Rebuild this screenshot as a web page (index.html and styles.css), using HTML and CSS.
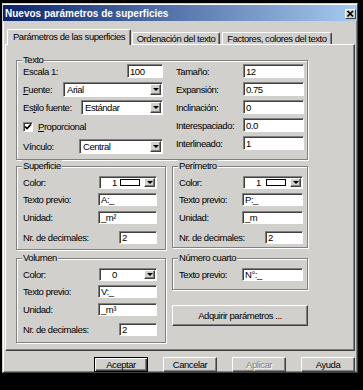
FILE: index.html
```html
<!DOCTYPE html>
<html lang="es">
<head>
    <meta charset="UTF-8">
    <title>Nuevos parámetros de superficies</title>
    <link rel="stylesheet" href="styles.css">
</head>
<body>

<div class="ventana">
    <div class="titulo">
        <span>Nuevos parámetros de superficies</span>
        <span class="cerrar">
            <svg width="9" height="8" viewBox="0 0 9 8"><path d="M1.5 1 L7 6.5 M7 1 L1.5 6.5" stroke="#000" stroke-width="1.7"/></svg>
        </span>
    </div>

    <div class="pestanas">
        <div class="pestana activa">Parámetros de las superficies</div>
        <div class="pestana p2">Ordenación del texto</div>
        <div class="pestana p3">Factores, colores del texto</div>
    </div>

    <div class="panel">
        <!-- Texto -->
        <div class="grupo texto">
            <span class="leyenda">Texto</span>
            <div class="col">
                <div class="fila"><span>Escala 1:</span><span class="campo alto w36">100</span></div>
                <div class="fila"><span><u>F</u>uente:</span><span class="lista w100">Arial<i class="flecha"></i></span></div>
                <div class="fila"><span>Es<u>t</u>ilo fuente:</span><span class="lista w82">Estándar<i class="flecha"></i></span></div>
                <div class="fila alta"><span class="check"><svg width="8" height="8" viewBox="0 0 8 8"><path d="M1 3.5 L3 5.6 L7 1.4" stroke="#000" stroke-width="1.6" fill="none"/></svg></span><span><u>P</u>roporcional</span></div>
                <div class="fila"><span>Vínculo:</span><span class="lista w84">Central<i class="flecha"></i></span></div>
            </div>
            <div class="col">
                <div class="fila"><span>Tamaño:</span><span class="campo alto w61">12</span></div>
                <div class="fila"><span>Expansión:</span><span class="campo alto w61">0.75</span></div>
                <div class="fila"><span>Inclinación:</span><span class="campo alto w61">0</span></div>
                <div class="fila"><span>Interespaciado:</span><span class="campo alto w61">0.0</span></div>
                <div class="fila"><span>Interlineado:</span><span class="campo alto w61">1</span></div>
            </div>
        </div>

        <div class="linea">
            <!-- Superficie -->
            <div class="grupo ancho superficie">
                <span class="leyenda">Superficie</span>
                <div class="fila f17"><span>Color:</span><span class="color w58">1<span class="derecha"><i class="muestra"></i><i class="flecha"></i></span></span></div>
                <div class="fila f17"><span>Texto previo:</span><span class="campo w59">A:_</span></div>
                <div class="fila f18"><span>Unidad:</span><span class="campo w59">_m²</span></div>
                <div class="fila f22"><span>Nr. de decimales:</span><span class="campo w38">2</span></div>
            </div>
            <!-- Perímetro -->
            <div class="grupo estrecho perimetro">
                <span class="leyenda">Perímetro</span>
                <div class="fila f17"><span>Color:</span><span class="color w60">1<span class="derecha"><i class="muestra"></i><i class="flecha"></i></span></span></div>
                <div class="fila f17"><span>Texto previo:</span><span class="campo w61">P:_</span></div>
                <div class="fila f18"><span>Unidad:</span><span class="campo w61">_m</span></div>
                <div class="fila f22"><span>Nr. de decimales:</span><span class="campo w38">2</span></div>
            </div>
        </div>

        <div class="linea abajo">
            <!-- Volumen -->
            <div class="grupo ancho volumen">
                <span class="leyenda">Volumen</span>
                <div class="fila f17"><span>Color:</span><span class="color w58">0<i class="flecha"></i></span></div>
                <div class="fila f17"><span>Texto previo:</span><span class="campo w59">V:_</span></div>
                <div class="fila f18"><span>Unidad:</span><span class="campo w59">_m³</span></div>
                <div class="fila f22"><span>Nr. de decimales:</span><span class="campo w38">2</span></div>
            </div>
            <div class="derecha-col">
                <!-- Número cuarto -->
                <div class="grupo estrecho cuarto">
                    <span class="leyenda">Número cuarto</span>
                    <div class="fila f17"><span>Texto previo:</span><span class="campo w61">N°:_</span></div>
                </div>
                <div class="boton adquirir">Adquirir parámetros ...</div>
            </div>
        </div>
    </div>

    <div class="botones">
        <div class="boton defecto">Aceptar</div>
        <div class="boton">Cancelar</div>
        <div class="boton inactivo">Aplicar</div>
        <div class="boton">Ayuda</div>
    </div>
</div>

</body>
</html>
```

FILE: styles.css
```css
/* Fondo negro alrededor de la ventana */
body {
    margin: 0;
    background: #000;
    padding: 3px 0 0 2px;
    font-family: "Liberation Sans", Arial, sans-serif;
    font-size: 9.5px;
    letter-spacing: -0.45px;
    color: #000;
}

.ventana {
    width: 356px;
    height: 370px;
    box-sizing: border-box;
    background: #d1d0cc;
    border: 1px solid;
    border-color: #d1d0cc #404040 #404040 #d1d0cc;
    box-shadow: inset 1px 1px #fff, inset -1px -1px #808080;
    padding-top: 1px;
}

/* Barra de titulo */
.titulo {
    height: 16px;
    display: flex;
    align-items: center;
    justify-content: space-between;
    padding: 0 1px 0 2px;
    background: linear-gradient(to right, #0a246a, #a6caf0);
    color: #fff;
    font-size: 10px;
    font-weight: bold;
    letter-spacing: 0;
}

.cerrar {
    width: 11px;
    height: 10px;
    margin-top: 2px;
    box-sizing: border-box;
    background: #d1d0cc;
    border: 1px solid;
    border-color: #fff #404040 #404040 #fff;
    display: flex;
    align-items: center;
    justify-content: center;
}

/* Pestañas */
.pestanas {
    margin-top: 8px;
    height: 15px;
    padding-left: 4px;
    display: flex;
    align-items: flex-end;
}

.pestana {
    height: 12px;
    box-sizing: border-box;
    border: 1px solid;
    border-color: #fff #404040 transparent #fff;
    border-bottom: none;
    border-radius: 2px 2px 0 0;
    box-shadow: inset -1px 0 #808080;
    text-align: center;
    line-height: 11px;
    white-space: nowrap;
}

.activa {
    width: 124px;
    height: 16px;
    margin-bottom: -1px;
    position: relative;
    z-index: 1;
    background: #d1d0cc;
    line-height: 13px;
}

.p2 {
    width: 88px;
    margin-left: 1px;
}

.p3 {
    width: 110px;
    margin-left: 2px;
}

/* Panel principal */
.panel {
    margin-left: 2px;
    width: 350px;
    height: 307px;
    box-sizing: border-box;
    border: 1px solid;
    border-color: #fff #404040 #404040 #fff;
    box-shadow: inset -1px -1px #808080;
    padding: 15px 0 0 10px;
}

.grupo {
    position: relative;
    box-sizing: border-box;
    border: 1px solid #808080;
    box-shadow: inset 1px 1px #fff, 1px 1px #fff;
}

.leyenda {
    position: absolute;
    top: -7px;
    left: 5px;
    padding: 0 1px;
    line-height: 12px;
    background: #d1d0cc;
    white-space: nowrap;
}

.texto {
    width: 292px;
    height: 100px;
    padding: 1px 0 0 6px;
    display: grid;
    grid-template-columns: 140px 128px;
    column-gap: 13px;
}

.fila {
    height: 18px;
    display: flex;
    align-items: center;
    justify-content: space-between;
    white-space: nowrap;
}

.alta {
    height: 21px;
    justify-content: flex-start;
}

.f17 { height: 17px; }
.f18 { height: 18px; }
.f22 { height: 22px; }

.linea {
    margin-top: 6px;
    display: flex;
    align-items: flex-start;
    gap: 6px;
}

.abajo {
    margin-top: 8px;
}

.ancho {
    width: 150px;
    height: 84px;
    padding: 7px 8px 0 6px;
}

.estrecho {
    width: 136px;
    height: 82px;
    padding: 7px 4px 0 6px;
}

.volumen {
    height: 85px;
}

.cuarto {
    height: 32px;
}

.derecha-col {
    width: 136px;
    display: flex;
    flex-direction: column;
}

/* Campos de texto hundidos */
.campo, .lista, .color {
    height: 13px;
    box-sizing: border-box;
    background: #fff;
    border: 1px solid;
    border-color: #808080 #fff #fff #808080;
    box-shadow: inset 1px 1px #404040;
    display: flex;
    align-items: center;
    padding-left: 2px;
}

.alto { height: 14px; }

.lista {
    height: 15px;
    padding-left: 3px;
    justify-content: space-between;
}

.color {
    padding-left: 12px;
    justify-content: space-between;
}

.derecha {
    display: flex;
    align-items: center;
    gap: 4px;
}

.muestra {
    width: 20px;
    height: 7px;
    box-sizing: border-box;
    border: 1px solid #000;
    background: #fff;
}

.flecha {
    width: 11px;
    height: 100%;
    margin-right: 1px;
    box-sizing: border-box;
    background: #d1d0cc;
    border: 1px solid;
    border-color: #fff #404040 #404040 #fff;
    box-shadow: inset -1px -1px #808080;
    display: flex;
    align-items: center;
    justify-content: center;
}

.lista .flecha { height: 11px; }
.color .flecha { height: 9px; }

.flecha::after {
    content: "";
    border-left: 3px solid transparent;
    border-right: 3px solid transparent;
    border-top: 3px solid #000;
}

.w36 { width: 36px; }
.w38 { width: 38px; }
.w58 { width: 58px; }
.w59 { width: 59px; }
.w60 { width: 60px; }
.w61 { width: 61px; }
.w82 { width: 82px; }
.w84 { width: 84px; }
.w100 { width: 100px; }

.check {
    width: 10px;
    height: 10px;
    margin-right: 5px;
    box-sizing: border-box;
    background: #fff;
    border: 1px solid;
    border-color: #808080 #fff #fff #808080;
    box-shadow: inset 1px 1px #404040;
    display: flex;
    align-items: center;
    justify-content: center;
}

/* Botones */
.boton {
    box-sizing: border-box;
    background: #d1d0cc;
    border: 1px solid;
    border-color: #fff #404040 #404040 #fff;
    box-shadow: inset -1px -1px #808080;
    display: flex;
    align-items: center;
    justify-content: center;
    white-space: nowrap;
}

.adquirir {
    margin-top: 15px;
    height: 21px;
}

.botones {
    margin-top: 6px;
    padding-right: 2px;
    display: flex;
    justify-content: flex-end;
    gap: 15px;
}

.botones .boton {
    width: 54px;
    height: 15px;
}

.defecto {
    border-color: #000;
    box-shadow: inset 1px 1px #fff, inset -1px -1px #404040, inset -2px -2px #808080;
}

.inactivo {
    color: #808080;
    text-shadow: 1px 1px #fff;
}
```
